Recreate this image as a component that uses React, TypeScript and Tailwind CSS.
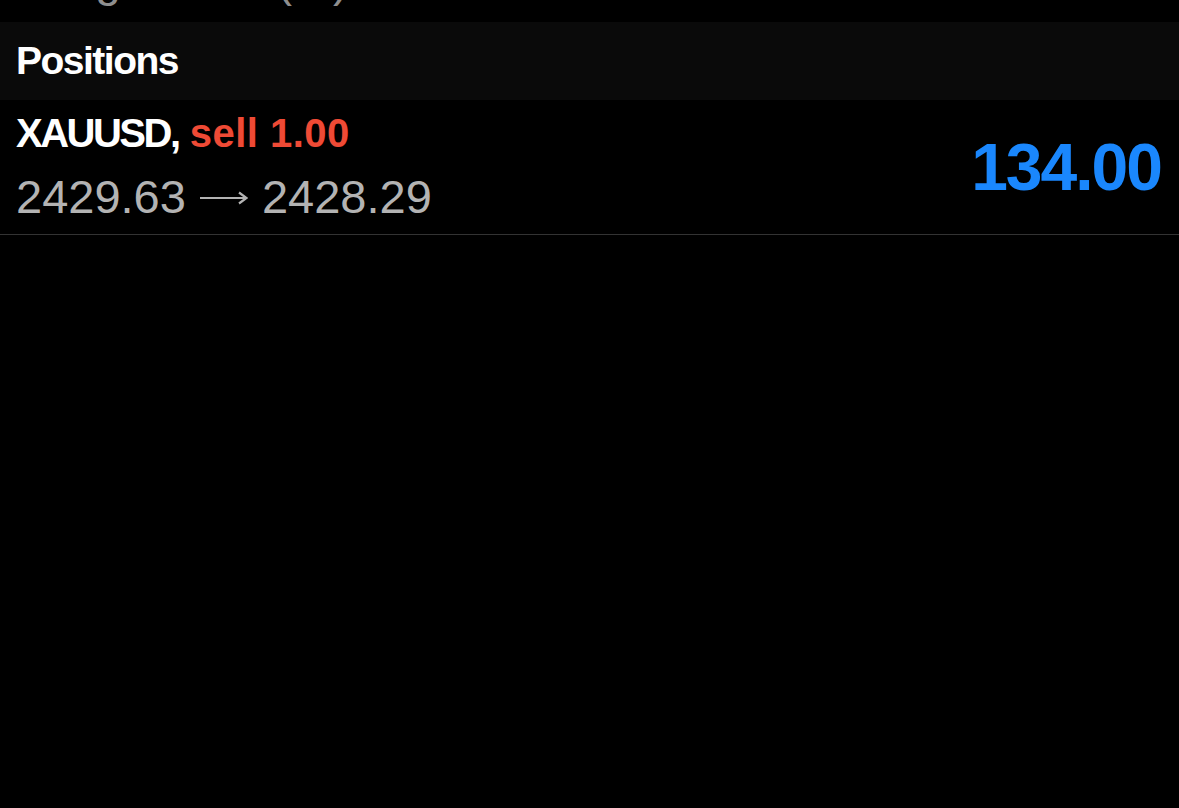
import React from "react";

export default function App() {
  return (
    <div className="w-[1179px] h-[808px] bg-black overflow-hidden font-['Liberation_Sans',Arial,sans-serif]">
      <div className="h-[22px] overflow-hidden px-4">
        <div className="mt-[-42px] text-[46px] leading-[45px] text-[#8e8e8e] whitespace-nowrap">
          Margin level (%):
        </div>
      </div>
      <div className="h-[78px] bg-[#0a0a0a] flex items-center px-4">
        <span className="text-[39px] leading-[39px] font-bold text-white pb-[2px] tracking-[-1.5px]">
          Positions
        </span>
      </div>
      <div className="flex items-center justify-between border-b border-[#333333] pl-4 pr-[18px] pt-[13px] pb-[14px]">
        <div className="flex flex-col">
          <div className="text-[40px] leading-[40px] font-bold text-white whitespace-nowrap">
            <span className="tracking-[-2.5px]">XAUUSD,</span>{" "}
            <span className="text-[#ef4a35] tracking-[0.5px]">sell 1.00</span>
          </div>
          <div className="mt-[20px] text-[47px] leading-[47px] text-[#b3b3b3] whitespace-nowrap flex items-center">
            <span>2429.63</span>
            <svg width="48" height="14" viewBox="0 0 48 14" className="mx-[14px] mt-[2px]">
              <path d="M0 7 H46 M39 1.5 L46.5 7 L39 12.5" stroke="#b3b3b3" strokeWidth="2.2" fill="none" />
            </svg>
            <span>2428.29</span>
          </div>
        </div>
        <div className="text-[66px] leading-[66px] font-bold text-[#1a87fd] tracking-[-2px]">
          134.00
        </div>
      </div>
    </div>
  );
}
